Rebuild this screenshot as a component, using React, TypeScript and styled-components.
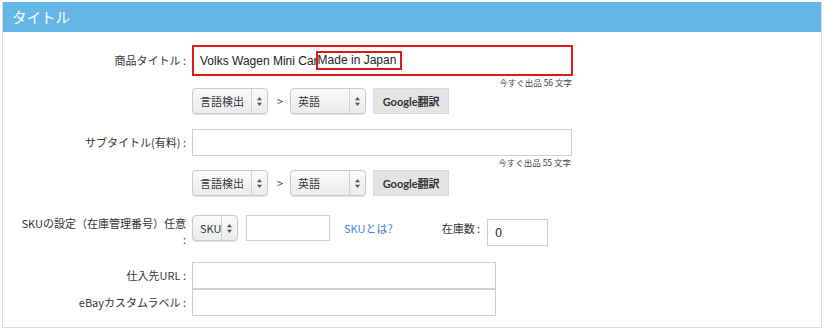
import React from "react"
import styled, { createGlobalStyle } from "styled-components"

const GlobalStyle = createGlobalStyle`
  body {
    margin: 0;
    background: #fff;
    font-family: "Noto Sans CJK JP", "Liberation Sans", sans-serif;
    color: #333;
  }
`

const Page = styled.div`
  padding: 2px 3px 4px 2px;
`

const Panel = styled.div`
  border: 1px solid #dcdcdc;
  border-top: none;
  padding-bottom: 11px;
`

const PanelHeader = styled.div`
  height: 30px;
  background: #65b6e6;
  color: #fff;
  font-size: 14.5px;
  line-height: 30px;
  padding-left: 9px;
`

const Form = styled.div`
  display: flex;
  flex-direction: column;
  padding-top: 13px;
`

const Row = styled.div<{ $gap?: number }>`
  display: flex;
  align-items: flex-start;
  margin-bottom: ${ ({ $gap }) => $gap ?? 0 }px;
`

const Label = styled.div<{ $h: number }>`
  width: 183px;
  flex: none;
  padding-right: 6px;
  text-align: right;
  font-size: 11px;
  line-height: ${ ({ $h }) => $h }px;
  color: #333;
`

const WrapLabel = styled.div`
  width: 183px;
  flex: none;
  padding-right: 6px;
  text-align: right;
  font-size: 11px;
  line-height: 16px;
  color: #333;
`

const Field = styled.div`
  display: flex;
  flex-direction: column;
`

const TextBox = styled.div<{ $w: number; $h: number; $alert?: boolean }>`
  box-sizing: border-box;
  width: ${ ({ $w }) => $w }px;
  height: ${ ({ $h }) => $h }px;
  border: ${ ({ $alert }) => $alert ? "2px solid #dd1a1a" : "1px solid #cfcfcf" };
  background: #fff;
  display: flex;
  align-items: center;
  padding-left: ${ ({ $alert }) => $alert ? 6 : 7 }px;
  font-family: "Liberation Sans", Arial, sans-serif;
  font-size: 12px;
  color: #222;
`

const Marked = styled.span`
  border: 2px solid #dd1a1a;
  padding: 0 4px 1px 0;
  margin-left: -2px;
`

const Counter = styled.div`
  align-self: flex-end;
  font-size: 8.5px;
  line-height: 10px;
  color: #444;
  margin-top: 1px;
  margin-right: 1px;
`

const Controls = styled.div<{ $top: number }>`
  display: flex;
  align-items: center;
  margin-top: ${ ({ $top }) => $top }px;
`

const Select = styled.div<{ $w: number }>`
  box-sizing: border-box;
  width: ${ ({ $w }) => $w }px;
  height: 26px;
  border: 1px solid #c9c9c9;
  border-radius: 4px;
  background: linear-gradient(#fafafa, #ececec);
  box-shadow: 0 1px 1px rgba(0, 0, 0, 0.12);
  display: flex;
  align-items: center;
  font-size: 11px;
  color: #333;
  overflow: hidden;
`

const SelectText = styled.span`
  flex: 1;
  padding-left: 7px;
  white-space: nowrap;
  overflow: hidden;
`

const SelectArrow = styled.span`
  flex: none;
  width: 15px;
  height: 100%;
  border-left: 1px solid #d0d0d0;
  display: flex;
  align-items: center;
  justify-content: center;
`

const Arrow = styled.span`
  margin: 0 7px 0 9px;
  font-size: 11px;
  color: #444;
`

const Button = styled.div`
  box-sizing: border-box;
  height: 26px;
  width: 76px;
  margin-left: 7px;
  background: #e4e4e4;
  border: 1px solid #dadada;
  display: flex;
  align-items: center;
  justify-content: center;
  font-family: Lato, "Noto Sans CJK JP", sans-serif;
  font-weight: 700;
  font-size: 11px;
  color: #333;
`

const SkuLine = styled.div`
  display: flex;
  align-items: flex-start;
  gap: 8px;
`

const Link = styled.a`
  color: #3f7fd6;
  font-size: 11px;
  line-height: 26px;
  margin-left: 6px;
  text-decoration: none;
`

const StockLabel = styled.span`
  font-size: 11px;
  line-height: 26px;
  margin-left: 41px;
  margin-right: -1px;
`

const StockBox = styled(TextBox)`
  margin-top: 4px;
`

const Spinner = () => (
  <svg width="7" height="11" viewBox="0 0 7 11">
    <path d="M3.5 1 L6 4.2 H1 Z" fill="#555" />
    <path d="M3.5 10 L6 6.8 H1 Z" fill="#555" />
  </svg>
)

const LangControls = ({ top }: { top: number }) => (
  <Controls $top={ top }>
    <Select $w={ 76 }>
      <SelectText>言語検出</SelectText>
      <SelectArrow><Spinner /></SelectArrow>
    </Select>
    <Arrow>&gt;</Arrow>
    <Select $w={ 76 }>
      <SelectText>英語</SelectText>
      <SelectArrow><Spinner /></SelectArrow>
    </Select>
    <Button>Google翻訳</Button>
  </Controls>
)

export default function App() {
  return (
    <Page>
      <GlobalStyle />
      <Panel>
        <PanelHeader>タイトル</PanelHeader>
        <Form>
          <Row $gap={ 15 }>
            <Label $h={ 30 }>商品タイトル :</Label>
            <Field>
              <TextBox $w={ 381 } $h={ 31 } $alert>
                Volks Wagen Mini Car<Marked>Made in Japan</Marked>
              </TextBox>
              <Counter>今すぐ出品 56 文字</Counter>
              <LangControls top={ 1 } />
            </Field>
          </Row>

          <Row $gap={ 19 }>
            <Label $h={ 26 }>サブタイトル(有料) :</Label>
            <Field>
              <TextBox $w={ 380 } $h={ 27 } />
              <Counter>今すぐ出品 55 文字</Counter>
              <LangControls top={ 3 } />
            </Field>
          </Row>

          <Row $gap={ 15 }>
            <WrapLabel>
              SKUの設定（在庫管理番号）任意<br />:
            </WrapLabel>
            <SkuLine>
              <Select $w={ 46 }>
                <SelectText>SKU</SelectText>
                <SelectArrow><Spinner /></SelectArrow>
              </Select>
              <TextBox $w={ 84 } $h={ 26 } />
              <Link>SKUとは?</Link>
              <StockLabel>在庫数 :</StockLabel>
              <StockBox $w={ 61 } $h={ 27 }>0</StockBox>
            </SkuLine>
          </Row>

          <Row>
            <Label $h={ 27 }>仕入先URL :</Label>
            <TextBox $w={ 304 } $h={ 27 } />
          </Row>
          <Row>
            <Label $h={ 27 }>eBayカスタムラベル :</Label>
            <TextBox $w={ 304 } $h={ 27 } />
          </Row>
        </Form>
      </Panel>
    </Page>
  )
}
